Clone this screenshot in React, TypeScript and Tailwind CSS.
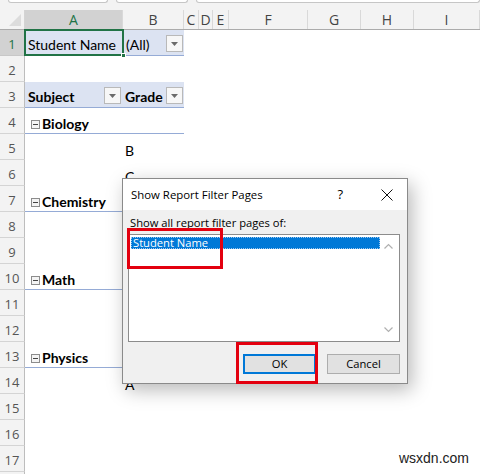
import React from 'react';

const cols = [
  { label: 'A', w: 'w-[98px]' },
  { label: 'B', w: 'w-[61px]' },
  { label: 'C', w: 'w-[15px]' },
  { label: 'D', w: 'w-[14px]' },
  { label: 'E', w: 'w-[16px]' },
  { label: 'F', w: 'w-[79px]' },
  { label: 'G', w: 'w-[53px]' },
  { label: 'H', w: 'w-[53px]' },
  { label: 'I', w: 'w-[66px]' },
];

function DropButton({ className = '' }: { className?: string }) {
  return (
    <span
      className={`flex items-center justify-center w-[17px] h-[17px] border border-[#b9b9b9] bg-[#f7f7f7] ${className}`}
    >
      <svg width="7" height="4" viewBox="0 0 7 4">
        <path d="M0 0h7L3.5 4z" fill="#6b6b6b" />
      </svg>
    </span>
  );
}

function Collapse() {
  return (
    <span className="relative inline-block w-[9px] h-[9px] border border-[#8c8c8c] bg-[#f4f4f4] mr-[2px] ml-[6px]">
      <span className="absolute left-[1px] right-[1px] top-[3px] h-px bg-[#444]" />
    </span>
  );
}

function RowHead({ n, active = false }: { n: number; active?: boolean }) {
  return (
    <div
      className={`w-[25px] shrink-0 flex items-center justify-center pt-[5px] border-b border-r text-[13px] ${
        active
          ? 'bg-[#d2d2d2] text-[#217346] border-r-[#217346] border-b-[#c8c8c8]'
          : 'bg-[#f3f3f3] text-[#555] border-[#d4d4d4] border-r-[#bdbdbd]'
      }`}
      style={{ fontFamily: '"Open Sans", sans-serif' }}
    >
      {n}
    </div>
  );
}

function GroupRow({ n, name }: { n: number; name: string }) {
  return (
    <div className="flex h-[26px]">
      <RowHead n={n} />
      <div className="w-[159px] flex items-end pb-[2px] border-b border-[#95abd6] font-bold text-[14px] text-black">
        <span className="flex items-center">
          <Collapse />
          <span className="leading-none">{name}</span>
        </span>
      </div>
    </div>
  );
}

function ValueRow({ n, value = '' }: { n: number; value?: string }) {
  return (
    <div className="flex h-[26px]">
      <RowHead n={n} />
      <div className="w-[98px]" />
      <div className="w-[61px] flex items-center pl-[2px] pt-[6px] text-[14px] text-black">{value}</div>
    </div>
  );
}

export default function App() {
  return (
    <div
      className="relative w-[480px] h-[474px] overflow-hidden bg-white"
      style={{ fontFamily: 'Lato, "Open Sans", sans-serif' }}
    >
      {/* formula bar remnants */}
      <div className="h-[10px] bg-[#f3f3f3] flex gap-[22px] pl-[8px]">
        <div className="w-[100px] h-[3px] bg-white border border-t-0 border-[#c6c6c6] rounded-b-[4px]" />
        <div className="w-[72px] h-[3px] bg-white border border-t-0 border-[#c6c6c6] rounded-b-[4px] -ml-[14px]" />
        <div className="flex-1 h-[3px] bg-white border border-t-0 border-[#c6c6c6] rounded-b-[4px] -ml-[14px]" />
      </div>

      {/* column headers */}
      <div
        className="flex h-[20px] bg-[#f3f3f3] border-b border-[#ababab] text-[14px] text-[#444]"
        style={{ fontFamily: '"Open Sans", sans-serif' }}
      >
        <div className="w-[25px] shrink-0 relative border-r border-[#d4d4d4]">
          <svg className="absolute right-[3px] bottom-[3px]" width="12" height="12" viewBox="0 0 12 12">
            <path d="M12 0v12H0z" fill="#dcdcdc" />
          </svg>
        </div>
        {cols.map((c) => (
          <div
            key={c.label}
            className={`${c.w} shrink-0 flex items-center justify-center border-r border-[#d9d9d9] ${
              c.label === 'A' ? 'bg-[#d2d2d2] text-[#217346]' : ''
            }`}
          >
            {c.label}
          </div>
        ))}
      </div>

      {/* row 1 */}
      <div className="flex h-[26px]">
        <RowHead n={1} active />
        <div className="relative w-[98px] bg-[#dce3f2] border-b border-[#95abd6] flex items-center pl-[3px] pt-[4px] text-[14px] text-black">
          Student Name
          <span className="absolute -left-[1px] -top-[1px] -right-[1px] -bottom-[1px] border-2 border-[#217346]" />
          <span className="absolute -right-[3px] -bottom-[3px] w-[5px] h-[5px] bg-[#217346] border border-white" />
        </div>
        <div className="w-[61px] bg-[#dce3f2] border-b border-[#95abd6] flex items-center pl-[3px] text-[14px] text-black">
          <span className="pt-[4px]">(All)</span>
          <DropButton className="ml-auto mr-[1px] mt-[2px]" />
        </div>
      </div>

      <ValueRow n={2} />

      {/* row 3 */}
      <div className="flex h-[26px]">
        <RowHead n={3} />
        <div className="w-[98px] bg-[#dce3f2] border-b border-[#95abd6] flex items-center pl-[3px] font-bold text-[14px] text-black">
          <span className="pt-[4px]">Subject</span>
          <DropButton className="ml-auto mr-[2px] mt-[2px]" />
        </div>
        <div className="w-[61px] bg-[#dce3f2] border-b border-[#95abd6] flex items-center pl-[2px] font-bold text-[14px] text-black">
          <span className="pt-[4px]">Grade</span>
          <DropButton className="ml-auto mr-[1px] mt-[2px]" />
        </div>
      </div>

      <GroupRow n={4} name="Biology" />
      <ValueRow n={5} value="B" />
      <ValueRow n={6} value="C" />
      <GroupRow n={7} name="Chemistry" />
      <ValueRow n={8} />
      <ValueRow n={9} />
      <GroupRow n={10} name="Math" />
      <ValueRow n={11} />
      <ValueRow n={12} />
      <GroupRow n={13} name="Physics" />
      <ValueRow n={14} value="A" />
      <ValueRow n={15} />
      <ValueRow n={16} />
      <ValueRow n={17} />
      <div className="flex h-[26px]">
        <div className="w-[25px] shrink-0 bg-[#f3f3f3] border-r border-[#bdbdbd]" />
      </div>

      {/* dialog */}
      <div
        className="absolute left-[122px] top-[178px] w-[286px] h-[206px] border border-[#8a8a8a] bg-[#f0f0f0] shadow-[4px_6px_18px_rgba(0,0,0,0.28)] flex flex-col text-[11.2px] text-black"
        style={{ fontFamily: '"Open Sans", "Noto Sans", sans-serif' }}
      >
        <div className="h-[31px] bg-white flex items-center pl-[8px] shrink-0">
          <span className="text-[11.4px]">Show Report Filter Pages</span>
          <span className="ml-auto text-[13px] mr-[38px]">?</span>
          <svg className="mr-[14px]" width="12" height="12" viewBox="0 0 12 12">
            <path d="M0.5 0.5l11 11M11.5 0.5l-11 11" stroke="#111" strokeWidth="1" />
          </svg>
        </div>
        <div className="px-[5px] pt-[5px] flex flex-col">
          <span className="pl-[2px] leading-[16px]">Show all report filter pages of:</span>
          <div className="mt-[3px] h-[108px] w-[272px] bg-white border border-[#8c8c8c] flex p-[2px]">
            <div className="flex-1">
              <div className="h-[12px] bg-[#0078d7] text-white outline outline-1 outline-dotted outline-[#9cc7ef] -outline-offset-1 flex items-center pl-[2px] leading-none">
                Student Name
              </div>
            </div>
            <div className="w-[17px] flex flex-col items-center justify-between py-[6px]">
              <svg width="9" height="6" viewBox="0 0 9 6">
                <path d="M0.5 5.5L4.5 1.5L8.5 5.5" fill="none" stroke="#b0b0b0" strokeWidth="1.2" />
              </svg>
              <svg width="9" height="6" viewBox="0 0 9 6">
                <path d="M0.5 0.5L4.5 4.5L8.5 0.5" fill="none" stroke="#b0b0b0" strokeWidth="1.2" />
              </svg>
            </div>
          </div>
          <div className="flex justify-end gap-[11px] mt-[12px] mr-[2px]">
            <button className="w-[73px] h-[20px] bg-[#e1e1e1] border-2 border-[#0078d7] flex items-center justify-center">
              OK
            </button>
            <button className="w-[73px] h-[20px] bg-[#e1e1e1] border border-[#adadad] flex items-center justify-center">
              Cancel
            </button>
          </div>
        </div>
      </div>

      {/* annotation boxes */}
      <div className="absolute left-[127px] top-[228px] w-[96px] h-[41px] border-[3px] border-[#e3000f]" />
      <div className="absolute left-[236px] top-[342px] w-[82px] h-[42px] border-[3px] border-[#e3000f]" />

      {/* watermark */}
      <div
        className="absolute right-[10px] bottom-[5px] text-[14px] text-[#222] bg-white/80 px-[1px]"
        style={{ fontFamily: '"Liberation Sans", Arial, sans-serif' }}
      >
        wsxdn.com
      </div>
    </div>
  );
}
